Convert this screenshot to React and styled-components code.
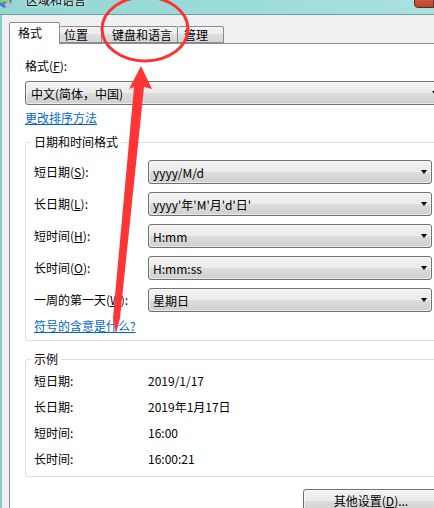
import { Fragment } from 'react';
import styled, { createGlobalStyle } from 'styled-components';

const GlobalStyle = createGlobalStyle`
  html, body {
    margin: 0;
    padding: 0;
    overflow: hidden;
    background: #f0f0f0;
  }
  body {
    font-family: "Noto Sans CJK SC", "Liberation Sans", sans-serif;
    font-size: 12px;
    color: #000;
  }
`;

const Window = styled.div`
  position: relative;
  width: 434px;
  height: 508px;
  overflow: hidden;
  display: flex;
  flex-direction: column;
  background: #f0f0f0;
`;

const TitleBar = styled.div`
  height: 14px;
  flex: none;
  display: flex;
  align-items: flex-start;
  background: linear-gradient(90deg, #93d6d4 0%, #9edcda 60%, #a9e1df 100%);
  border-bottom: 1px solid #6b9fa1;
  overflow: hidden;
`;

const TitleIcon = styled.svg`
  flex: none;
  margin: -6px 0 0 -2px;
`;

const TitleText = styled.span`
  margin: -6px 0 0 14px;
  font-size: 12px;
  line-height: 12px;
  color: #111;
  text-shadow: 0 0 4px rgba(255, 255, 255, 0.9);
`;

const CloseButton = styled.div`
  margin: -10px 0 0 auto;
  width: 18px;
  height: 16px;
  border: 1px solid #5b2a20;
  border-radius: 0 0 0 4px;
  background: linear-gradient(180deg, #e08a72 0%, #c9553a 60%, #b8462c 100%);
`;

const Body = styled.div`
  flex: 1;
  display: flex;
  flex-direction: column;
  border-left: 2px solid #86cccb;
  padding: 7px 0 0 7px;
  min-height: 0;
`;

const TabRow = styled.div`
  display: flex;
  align-items: flex-end;
  height: 21px;
  flex: none;
`;

const Tab = styled.div`
  box-sizing: border-box;
  width: ${({ $w }) => $w}px;
  height: ${({ $active }) => ($active ? 22 : 17)}px;
  padding-left: ${({ $pl }) => $pl}px;
  margin-bottom: ${({ $active }) => ($active ? -1 : 0)}px;
  border: 1px solid #898c95;
  border-bottom: ${({ $active }) => ($active ? 'none' : '1px solid #898c95')};
  border-left-width: ${({ $first }) => ($first ? 1 : 0)}px;
  border-radius: 2px 2px 0 0;
  background: ${({ $active }) =>
    $active ? '#fff' : 'linear-gradient(180deg, #f3f3f3 0%, #ebebeb 50%, #dedede 50%, #d6d6d6 100%)'};
  font-size: 12px;
  line-height: ${({ $active }) => ($active ? 20 : 15)}px;
  white-space: nowrap;
  position: relative;
  z-index: ${({ $active }) => ($active ? 2 : 1)};
`;

const Panel = styled.div`
  box-sizing: border-box;
  width: 441px;
  flex: 1;
  background: #fff;
  border: 1px solid #898c95;
  border-right-color: transparent;
  padding: 14px 12px 0 15px;
  display: flex;
  flex-direction: column;
`;

const Label = styled.div`
  line-height: 16px;
  white-space: nowrap;
  u {
    text-decoration: underline;
    text-underline-offset: 1px;
  }
`;

const Combo = styled.div`
  box-sizing: border-box;
  height: 24px;
  margin: ${({ $wide }) => ($wide ? '7px -6px 0 0' : '0')};
  border: 1px solid #707070;
  border-radius: 3px;
  background: linear-gradient(180deg, #f2f2f2 0%, #ebebeb 50%, #dddddd 50%, #cfcfcf 100%);
  box-shadow: inset 0 0 0 1px rgba(255, 255, 255, 0.55);
  display: flex;
  align-items: center;
  padding: 0 4px 0 ${({ $wide }) => ($wide ? 5 : 4)}px;
  font-size: 12px;
  white-space: nowrap;

  span {
    flex: 1;
  }

  &::after {
    content: '';
    border-left: 3.5px solid transparent;
    border-right: 3.5px solid transparent;
    border-top: 4px solid #000;
  }
`;

const Link = styled.a`
  display: block;
  margin-top: ${({ $mt }) => $mt}px;
  line-height: 16px;
  color: #0066cc;
  text-decoration: underline;
  text-underline-offset: 1px;
  cursor: pointer;
`;

const Group = styled.fieldset`
  margin: ${({ $mt }) => $mt}px 0 0 0;
  padding: ${({ $pt }) => $pt}px 4px ${({ $pb }) => $pb}px 8px;
  border: 1px solid #d5dfe5;
  border-radius: 3px;
  min-width: 0;
`;

const Legend = styled.legend`
  padding: 0 3px;
  margin-left: -3px;
  line-height: 16px;
  color: #000;
`;

const FormGrid = styled.div`
  display: grid;
  grid-template-columns: 114px 1fr;
  grid-auto-rows: ${({ $row }) => $row}px;
  row-gap: ${({ $gap }) => $gap}px;
  align-items: center;
`;

const Value = styled.div`
  line-height: 16px;
  white-space: nowrap;
`;

const Footer = styled.div`
  display: flex;
  justify-content: flex-end;
  margin: 12px -4px 0 0;
`;

const Button = styled.div`
  box-sizing: border-box;
  width: 138px;
  height: 24px;
  border: 1px solid #707070;
  border-radius: 3px;
  background: linear-gradient(180deg, #f2f2f2 0%, #ebebeb 50%, #dddddd 50%, #cfcfcf 100%);
  box-shadow: inset 0 0 0 1px rgba(255, 255, 255, 0.6);
  text-align: center;
  line-height: 22px;
  padding-right: 2px;
  white-space: nowrap;
  u {
    text-underline-offset: 1px;
  }
`;

const Annotation = styled.svg`
  position: absolute;
  inset: 0;
  pointer-events: none;
  z-index: 10;
`;

const formatRows = [
  { label: '短日期', key: 'S', value: 'yyyy/M/d' },
  { label: '长日期', key: 'L', value: "yyyy'年'M'月'd'日'" },
  { label: '短时间', key: 'H', value: 'H:mm' },
  { label: '长时间', key: 'O', value: 'H:mm:ss' },
  { label: '一周的第一天', key: 'W', value: '星期日' },
];

const sampleRows = [
  { label: '短日期:', value: '2019/1/17' },
  { label: '长日期:', value: '2019年1月17日' },
  { label: '短时间:', value: '16:00' },
  { label: '长时间:', value: '16:00:21' },
];

const tabs = [
  { name: '格式', w: 51, pl: 8, active: true },
  { name: '位置', w: 42, pl: 4 },
  { name: '键盘和语言', w: 76, pl: 10 },
  { name: '管理', w: 46, pl: 6 },
];

const App = () => (
  <Window>
    <GlobalStyle />
    <TitleBar>
      <TitleIcon width="14" height="14" viewBox="0 0 14 14">
        <circle cx="7" cy="7" r="6" fill="#4f86c6" stroke="#2f5f96" />
        <path d="M2 8 Q7 5 12 8" stroke="#9bd06a" strokeWidth="2" fill="none" />
        <circle cx="10" cy="11" r="3" fill="#b9bfc6" />
      </TitleIcon>
      <TitleText>区域和语言</TitleText>
      <CloseButton />
    </TitleBar>
    <Body>
      <TabRow>
        {tabs.map((t, i) => (
          <Tab key={t.name} $w={t.w} $pl={t.pl} $active={t.active} $first={i === 0}>
            {t.name}
          </Tab>
        ))}
      </TabRow>
      <Panel>
        <Label>
          格式(<u>F</u>):
        </Label>
        <Combo $wide>
          <span>中文(简体，中国)</span>
        </Combo>
        <Link $mt={5}>更改排序方法</Link>

        <Group $mt={8} $pt={10} $pb={6}>
          <Legend>日期和时间格式</Legend>
          <FormGrid $row={24} $gap={8}>
            {formatRows.map((r) => (
              <Fragment key={r.key}>
                <Label>
                  {r.label}(<u>{r.key}</u>):
                </Label>
                <Combo>
                  <span>{r.value}</span>
                </Combo>
              </Fragment>
            ))}
          </FormGrid>
          <Link $mt={6}>符号的含意是什么?</Link>
        </Group>

        <Group $mt={10} $pt={1} $pb={4}>
          <Legend>示例</Legend>
          <FormGrid $row={26} $gap={0}>
            {sampleRows.map((r) => (
              <Fragment key={r.label}>
                <Label>{r.label}</Label>
                <Value>{r.value}</Value>
              </Fragment>
            ))}
          </FormGrid>
        </Group>

        <Footer>
          <Button>
            其他设置(<u>D</u>)...
          </Button>
        </Footer>
      </Panel>
    </Body>
    <Annotation width="434" height="508" viewBox="0 0 434 508">
      <ellipse cx="145" cy="29" rx="43" ry="32" fill="none" stroke="#ff3030" strokeWidth="3" />
      <polygon
        points="141,66 152,89 144,87 120,318 116,334 113,318 134,87 129,89"
        fill="#ff3535"
      />
    </Annotation>
  </Window>
);

export default App;
